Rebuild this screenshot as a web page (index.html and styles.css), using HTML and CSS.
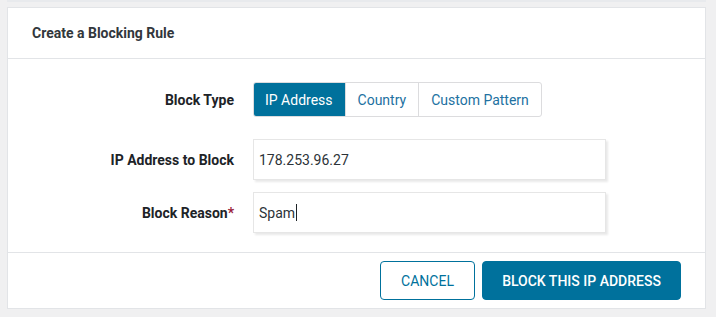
FILE: index.html
```html
<!DOCTYPE html>
<html>
<head>
<meta charset="utf-8">
<link rel="stylesheet" href="styles.css">
</head>
<body>
<div class="topstrip"></div>
<div class="card">
  <div class="card-header">Create a Blocking Rule</div>
  <div class="card-body">
    <div class="label">Block Type</div>
    <div class="segmented">
      <span class="seg active">IP Address</span>
      <span class="seg">Country</span>
      <span class="seg">Custom Pattern</span>
    </div>
    <div class="label tall">IP Address to Block</div>
    <div class="field">178.253.96.27</div>
    <div class="label tall">Block Reason<span class="req">*</span></div>
    <div class="field">Spam<span class="caret"></span></div>
  </div>
  <div class="card-footer">
    <button class="btn btn-outline">CANCEL</button>
    <button class="btn btn-primary">BLOCK THIS IP ADDRESS</button>
  </div>
</div>
</body>
</html>
```
FILE: styles.css
```css
html, body {
  margin: 0;
  padding: 0;
  background: #f0f0f1;
  font-family: Roboto, "Liberation Sans", sans-serif;
}
.topstrip {
  position: absolute;
  left: 7px;
  top: 0;
  width: 699px;
  height: 2px;
  background: #e8eaed;
}
.card {
  margin: 7px 0 0 7px;
  width: 697px;
  background: #fff;
  border: 1px solid #e2e4e7;
}
.card-header {
  height: 51px;
  box-sizing: border-box;
  padding: 0 0 1px 24px;
  display: flex;
  align-items: center;
  font-size: 14px;
  font-weight: 700;
  color: #32373c;
  border-bottom: 1px solid #e2e4e7;
}
.card-body {
  display: grid;
  grid-template-columns: 226px 1fr;
  grid-template-rows: 35px 63px 53px;
  column-gap: 19px;
  padding: 23px 0 19px 0;
  border-bottom: 1px solid #e2e4e7;
}
.card-body > :nth-child(3), .card-body > :nth-child(4) { margin-top: 22px; }
.card-body > :nth-child(5), .card-body > :nth-child(6) { margin-top: 12px; }
.label {
  display: flex;
  align-items: center;
  justify-content: flex-end;
  font-size: 14px;
  font-weight: 700;
  color: #1d2327;
  height: 35px;
}
.label.tall { height: 41px; }
.req { color: #9b1c3a; font-weight: 700; }
.segmented {
  display: flex;
  width: max-content;
  border: 1px solid #dcdcde;
  border-radius: 3px;
  overflow: hidden;
  height: 35px;
  box-sizing: border-box;
}
.seg {
  display: flex;
  align-items: center;
  padding: 0 12px 0 12px;
  font-size: 14px;
  color: #2271a1;
  border-left: 1px solid #dcdcde;
}
.seg:first-child { border-left: none; }
.seg.active {
  background: #00719c;
  color: #fff;
  padding: 0 12px 0 11px;
}
.field {
  width: 353px;
  height: 41px;
  box-sizing: border-box;
  border: 1px solid #e6e6e6;
  box-shadow: 2px 2px 2px rgba(0,0,0,0.09);
  display: flex;
  align-items: center;
  padding-left: 5px;
  font-size: 14px;
  color: #2c3338;
}
.caret {
  display: inline-block;
  width: 1px;
  height: 17px;
  background: #1d2327;
  margin-left: 1px;
}
.card-footer {
  display: flex;
  justify-content: flex-end;
  gap: 7px;
  padding: 8px 24px 8px 0;
}
.btn {
  height: 39px;
  box-sizing: border-box;
  font-family: Roboto, "Liberation Sans", sans-serif;
  font-size: 14px;
  border-radius: 4px;
  cursor: pointer;
}
.btn-outline {
  width: 95px;
  background: #fff;
  border: 1px solid #00719c;
  color: #00719c;
}
.btn-primary {
  width: 199px;
  background: #00719c;
  border: 1px solid #00719c;
  color: #fff;
  font-weight: 500;
}
```
